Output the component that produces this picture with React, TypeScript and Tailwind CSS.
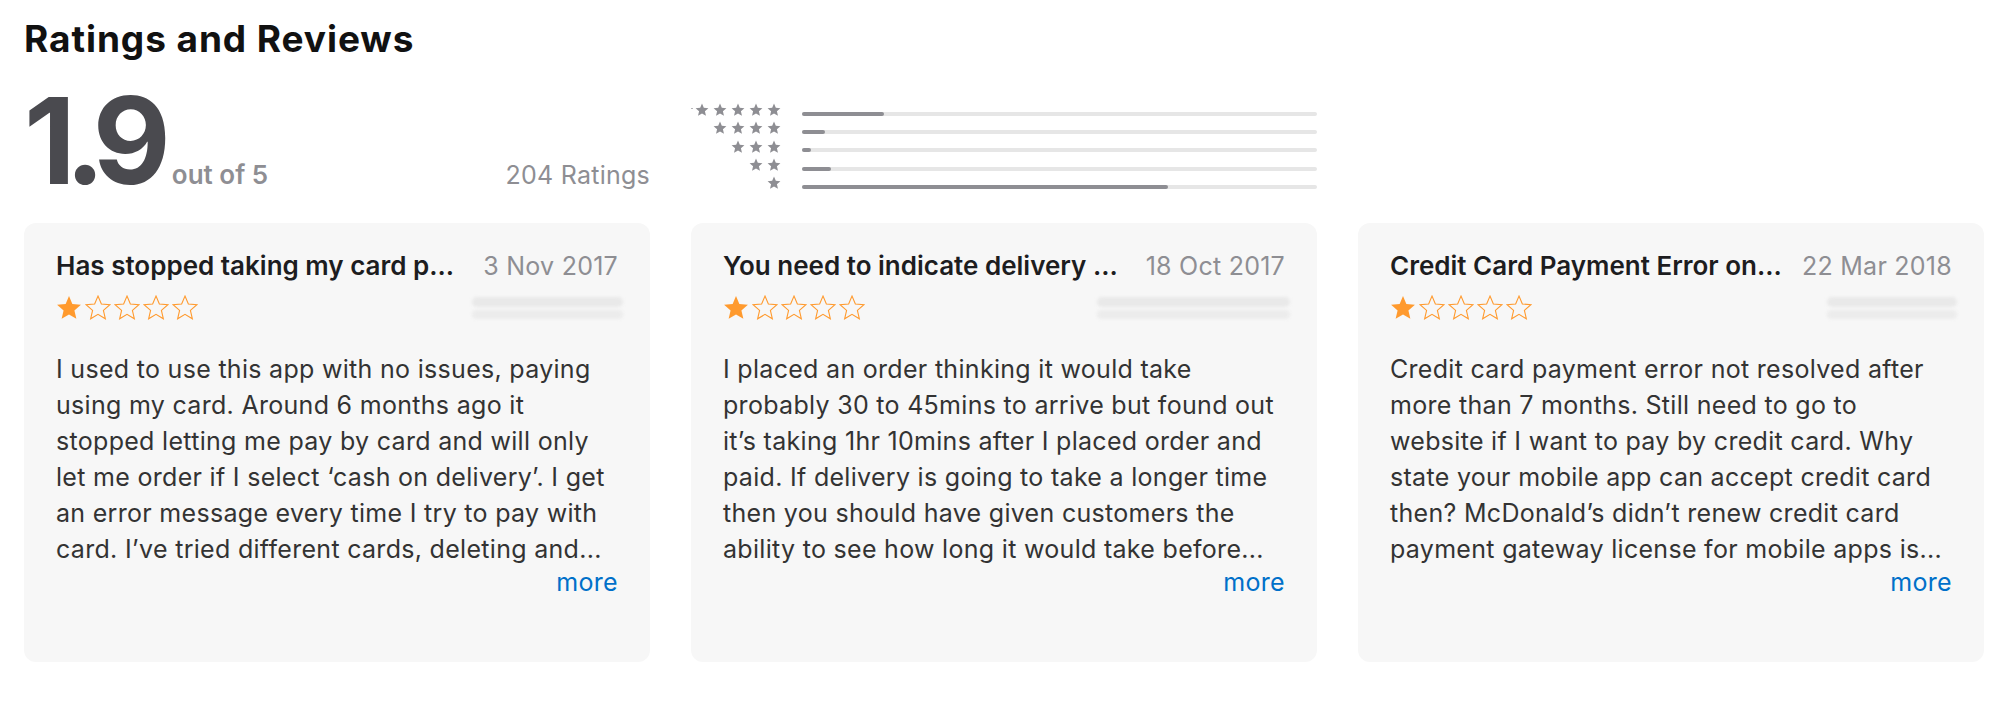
import React from 'react'

interface Review {
  title: string
  date: string
  nameWidth: number
  lines: string[]
}

const REVIEWS: Review[] = [
  {
    title: 'Has stopped taking my card p...',
    date: '3 Nov 2017',
    nameWidth: 151,
    lines: [
      'I used to use this app with no issues, paying',
      'using my card. Around 6 months ago it',
      'stopped letting me pay by card and will only',
      'let me order if I select ‘cash on delivery’. I get',
      'an error message every time I try to pay with',
      'card. I’ve tried different cards, deleting and...',
    ],
  },
  {
    title: 'You need to indicate delivery ...',
    date: '18 Oct 2017',
    nameWidth: 193,
    lines: [
      'I placed an order thinking it would take',
      'probably 30 to 45mins to arrive but found out',
      'it’s taking 1hr 10mins after I placed order and',
      'paid. If delivery is going to take a longer time',
      'then you should have given customers the',
      'ability to see how long it would take before...',
    ],
  },
  {
    title: 'Credit Card Payment Error on...',
    date: '22 Mar 2018',
    nameWidth: 130,
    lines: [
      'Credit card payment error not resolved after',
      'more than 7 months. Still need to go to',
      'website if I want to pay by credit card. Why',
      'state your mobile app can accept credit card',
      'then? McDonald’s didn’t renew credit card',
      'payment gateway license for mobile apps is...',
    ],
  },
]

// share of ratings per star count, 5 down to 1
const HISTOGRAM = [
  { stars: 5, pct: 16 },
  { stars: 4, pct: 4.5 },
  { stars: 3, pct: 1.8 },
  { stars: 2, pct: 5.7 },
  { stars: 1, pct: 71 },
]

const STAR_POINTS = '12,1 15.1,8.3 23,9 17,14.2 18.8,22 12,17.9 5.2,22 7,14.2 1,9 8.9,8.3'

function Star({ filled, className }: { filled: boolean; className: string }) {
  return (
    <svg viewBox="0 0 24 24" className={className}>
      <polygon
        points={STAR_POINTS}
        fill={filled ? 'currentColor' : 'none'}
        stroke="currentColor"
        strokeWidth={filled ? 0 : 1}
        strokeLinejoin="miter"
      />
    </svg>
  )
}

function Histogram() {
  return (
    <div className="mt-[20px] flex flex-col">
      {HISTOGRAM.map((row, i) => (
        <div key={row.stars} className="flex h-[18.33px] items-center">
          <div className="relative flex w-[90px] justify-end gap-[4px] text-[#8e8e93]">
            {i === 0 && <span className="absolute left-0 top-[5px] h-[1px] w-[2px] bg-[#b5b5b8]" />}
            {Array.from({ length: row.stars }).map((_, j) => (
              <Star key={j} filled className="h-[14px] w-[14px]" />
            ))}
          </div>
          <div className="ml-[21px] mt-[7px] h-[4px] flex-1 rounded-full bg-[#e6e6e6]">
            <div className="h-full rounded-full bg-[#8e8e93]" style={{ width: `${row.pct}%` }} />
          </div>
        </div>
      ))}
    </div>
  )
}

function ReviewCard({ review }: { review: Review }) {
  return (
    <div className="h-[439px] rounded-[12px] bg-[#f7f7f7] px-[32px] pt-[28px]">
      <div className="flex items-baseline justify-between gap-[20px] leading-[30px]">
        <h3 className="min-w-0 truncate text-[26px] font-semibold text-[#1d1d1f]">{review.title}</h3>
        <span className="shrink-0 text-[25px] tracking-[0.01em] text-[#8e8e93]">{review.date}</span>
      </div>
      <div className="mt-[15px] flex h-[24px] items-center justify-between">
        <div className="flex gap-[3px] text-[#ff9a2e]">
          {[0, 1, 2, 3, 4].map((i) => (
            <Star key={i} filled={i === 0} className="h-[26px] w-[26px]" />
          ))}
        </div>
        <div className="mr-[-5px] flex flex-col gap-[3px] blur-[1.5px]" style={{ width: review.nameWidth }}>
          <div className="h-[10px] rounded-full bg-[#e9e9e9]" />
          <div className="h-[9px] rounded-full bg-[#ececec]" />
        </div>
      </div>
      <p className="mt-[31px] text-[25px] leading-[36px] tracking-[0.012em] text-[#333333]">
        {review.lines.map((line, i) => (
          <span key={i} className="block whitespace-nowrap">{line}</span>
        ))}
      </p>
      <div className="text-right text-[25px] leading-[30px] tracking-[0.012em] text-[#0070c9]">more</div>
    </div>
  )
}

export default function App() {
  return (
    <div className="min-h-[710px] w-[1994px] bg-white pl-[24px] font-['Inter','Noto_Sans',sans-serif] antialiased">
      <h2 className="pt-[19px] text-[37px] font-bold leading-[40px] tracking-[0.025em] text-[#111111]">Ratings and Reviews</h2>

      <div className="mt-[22px] grid grid-cols-[626px_626px_626px] gap-x-[41px]">
        <div className="flex items-baseline justify-between">
          <div className="flex items-baseline">
            <span className="text-[120px] font-bold leading-none tracking-[-0.09em] text-[#4a4a4f]">1.9</span>
            <span className="ml-[12px] text-[26px] font-semibold text-[#8e8e93]">out of 5</span>
          </div>
          <span className="text-[25px] font-normal tracking-[0.01em] text-[#8e8e93]">204 Ratings</span>
        </div>
        <Histogram />
      </div>

      <div className="mt-[22px] grid grid-cols-[626px_626px_626px] gap-x-[41px]">
        {REVIEWS.map((r) => (
          <ReviewCard key={r.date} review={r} />
        ))}
      </div>
    </div>
  )
}
